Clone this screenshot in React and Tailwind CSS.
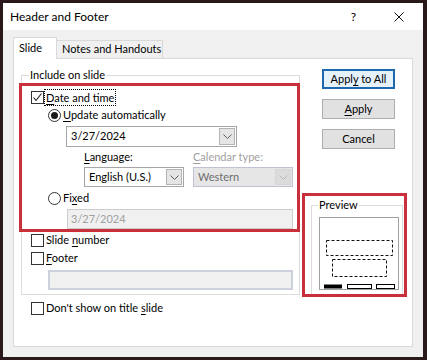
import React from 'react';

function Chevron({ color = '#5f5f5f' }) {
  return (
    <svg width="9" height="5" viewBox="0 0 9 5" fill="none">
      <path d="M0.5 0.5 L4.5 4.5 L8.5 0.5" stroke={color} strokeWidth="1" />
    </svg>
  );
}

function Checkbox({ checked }) {
  return (
    <span className="flex h-[13px] w-[13px] shrink-0 items-center justify-center border border-[#333] bg-white">
      {checked && (
        <svg width="11" height="11" viewBox="0 0 11 11" fill="none">
          <path d="M1.5 5.5 L4 8.5 L9.5 1.5" stroke="#1a1a1a" strokeWidth="1.1" />
        </svg>
      )}
    </span>
  );
}

function Radio({ checked }) {
  return (
    <span className="flex h-[13px] w-[13px] shrink-0 items-center justify-center rounded-full border border-[#333] bg-white">
      {checked && <span className="h-[7px] w-[7px] rounded-full bg-[#1a1a1a]" />}
    </span>
  );
}

function Combo({ value, className, disabled }) {
  return (
    <div
      className={`flex h-[20px] items-stretch border p-[1px] ${
        disabled ? 'border-[#bfc2d2] bg-[#e6e6e6] text-[#6d6d6d]' : 'border-[#a6a6a6] bg-white text-black'
      } ${className}`}
    >
      <span className="flex flex-1 items-center pl-[3px]">{value}</span>
      <span
        className={`flex w-[16px] items-center justify-center border ${
          disabled ? 'border-[#d6d6d6] bg-[#dcdcdc]' : 'border-[#b4b4b4] bg-[#e5e5e5]'
        }`}
      >
        <Chevron color={disabled ? '#b8b8b8' : '#5f5f5f'} />
      </span>
    </div>
  );
}

function Button({ children, primary }) {
  return (
    <div
      className={`flex h-[20px] w-[73px] items-center justify-center ${
        primary ? 'border-2 border-[#1c6aad] bg-[#e5f1fb]' : 'border border-[#adadad] bg-[#e1e1e1]'
      }`}
    >
      {children}
    </div>
  );
}

const U = ({ children }) => <span className="underline underline-offset-[2px]">{children}</span>;

export default function App() {
  return (
    <div className="relative h-[360px] w-[427px] bg-[#2a191b] pb-[3px] pl-[3px] pr-[4px] pt-[3px] font-['Lato','Liberation_Sans',sans-serif] text-[11px] text-black">
      <div className="flex h-full flex-col">
        {/* title bar */}
        <div className="flex h-[27px] items-center bg-white pl-[7px] pr-[19px]">
          <span className="text-[12px]">Header and Footer</span>
          <span className="ml-auto mr-[38px] text-[12px]">?</span>
          <svg width="10" height="10" viewBox="0 0 10 10" fill="none">
            <path d="M0.5 0.5 L9.5 9.5 M9.5 0.5 L0.5 9.5" stroke="#111" strokeWidth="1" />
          </svg>
        </div>

        <div className="flex flex-1 flex-col bg-[#f0f0f0] px-[10px] pb-[10px] pt-[7px]">
          {/* tabs */}
          <div className="flex h-[21px] items-end">
            <div className="relative z-10 -mb-[1px] flex h-[22px] w-[44px] items-center border border-b-0 border-[#d9d9d9] bg-white pl-[5px]">
              Slide
            </div>
            <div className="flex h-[18px] w-[106px] items-center border border-b-0 border-l-0 border-[#d9d9d9] bg-[#f0f0f0] pl-[5px]">
              Notes and Handouts
            </div>
          </div>

          {/* panel */}
          <div className="flex flex-1 border border-[#d9d9d9] bg-white pl-[7px] pt-[10px]">
            <div className="flex w-[279px] flex-col">
              <div className="relative mt-[6px] flex h-[220px] flex-col border border-[#dcdcdc] pl-[9px]">
                <span className="absolute -top-[8px] left-[7px] bg-white px-[1px] leading-[14px]">Include on slide</span>

                <div className="mt-[14px] flex h-[14px] items-center gap-[2px]">
                  <Checkbox checked />
                  <span className="leading-[13px] outline-1 outline-offset-[1px] outline-black outline-dotted">
                    <U>D</U>ate and time
                  </span>
                </div>

                <div className="ml-[17px] mt-[4px] flex h-[14px] items-center gap-[2px]">
                  <Radio checked />
                  <span>
                    <U>U</U>pdate automatically
                  </span>
                </div>

                <Combo value="3/27/2024" className="ml-[35px] mt-[4px] h-[21px] w-[171px]" />

                <div className="ml-[53px] mt-[3px] flex h-[15px] items-center">
                  <span className="w-[109px]">
                    <U>L</U>anguage:
                  </span>
                  <span className="text-[#a0a0a0]">
                    <U>C</U>alendar type:
                  </span>
                </div>

                <div className="ml-[53px] mt-[2px] flex gap-[9px]">
                  <Combo value="English (U.S.)" className="w-[100px]" />
                  <Combo value="Western" className="w-[100px]" disabled />
                </div>

                <div className="ml-[17px] mt-[4px] flex h-[14px] items-center gap-[2px]">
                  <Radio />
                  <span>
                    Fi<U>x</U>ed
                  </span>
                </div>

                <div className="ml-[36px] mt-[4px] flex h-[20px] w-[226px] items-center border border-[#cccccc] bg-[#f0f0f0] pl-[3px] text-[#a0a0a0]">
                  3/27/2024
                </div>

                <div className="mt-[4px] flex h-[14px] items-center gap-[2px]">
                  <Checkbox />
                  <span>
                    Slide <U>n</U>umber
                  </span>
                </div>

                <div className="mt-[4px] flex h-[14px] items-center gap-[2px]">
                  <Checkbox />
                  <span>
                    <U>F</U>ooter
                  </span>
                </div>

                <div className="ml-[17px] mt-[5px] h-[20px] w-[245px] border-2 border-[#cdd0dd] bg-[#f0f0f0]" />
              </div>

              <div className="ml-[10px] mt-[6px] flex h-[14px] items-center gap-[2px]">
                <Checkbox />
                <span>
                  Don't show on title <U>s</U>lide
                </span>
              </div>
            </div>

            <div className="flex flex-col">
              <div className="ml-[22px] flex flex-col gap-[10px]">
                <Button primary>
                  <span>
                    Appl<U>y</U> to All
                  </span>
                </Button>
                <Button>
                  <span>
                    <U>A</U>pply
                  </span>
                </Button>
                <Button>Cancel</Button>
              </div>

              <div className="relative ml-[11px] mt-[56px] h-[90px] w-[92px] border border-[#dcdcdc] pl-[7px] pt-[11px]">
                <span className="absolute -top-[8px] left-[6px] bg-white px-[1px] leading-[14px]">Preview</span>
                <div className="h-[73px] w-[80px] border border-[#a0a0a0] bg-white">
                  <svg width="78" height="71" viewBox="0 0 78 71" fill="none">
                    <rect x="6.5" y="22.5" width="66" height="15" stroke="#111" strokeDasharray="3 2" />
                    <rect x="12.5" y="41.5" width="54" height="17" stroke="#111" strokeDasharray="3 2" />
                    <rect x="4" y="66.5" width="18" height="4" fill="#000" />
                    <rect x="27.5" y="66.5" width="24" height="4" stroke="#000" />
                    <rect x="56.5" y="66.5" width="18" height="4" stroke="#000" />
                  </svg>
                </div>
              </div>
            </div>
          </div>
        </div>
      </div>

      {/* annotation boxes */}
      <div className="pointer-events-none absolute left-[19px] top-[83px] h-[149px] w-[281px] border-[3px] border-[#c8313b]" />
      <div className="pointer-events-none absolute left-[302px] top-[193px] h-[104px] w-[105px] border-[3px] border-[#c8313b]" />
    </div>
  );
}
